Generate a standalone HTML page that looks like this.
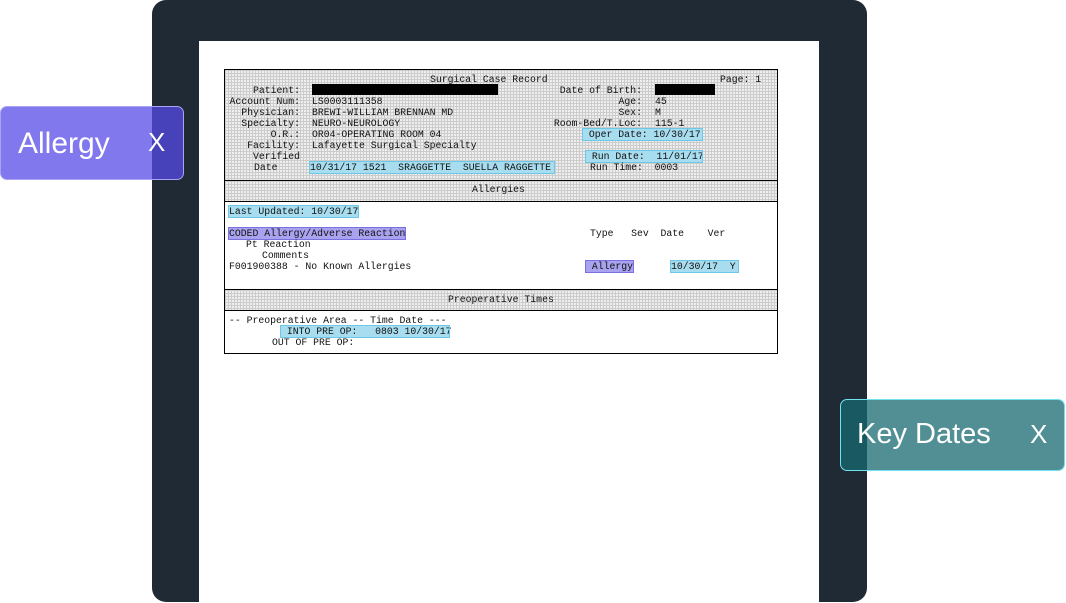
<!DOCTYPE html>
<html><head><meta charset="utf-8"><style>
body{margin:0;width:1066px;height:603px;background:#fff;position:relative;overflow:hidden;font-family:"Liberation Mono",monospace}
.frame{position:absolute;left:152px;top:0;width:715px;height:602px;background:#1f2a35;border-radius:14px}
.page{position:absolute;left:199px;top:41px;width:620px;height:562px;background:#fff}
.doc{position:absolute;left:224px;top:69px;width:552px;height:283px;border:1px solid #000}
.grid{position:absolute;left:0;width:552px;background-color:#eee;background-image:linear-gradient(#ccc 1px,transparent 1px),linear-gradient(90deg,#ccc 1px,transparent 1px);background-size:3px 3px}
.t{position:absolute;font-size:9.8px;line-height:11px;white-space:pre;color:#111}
.r{text-align:right}
.b{background:#a8ddef;outline:1px solid #6cc8e6}
.p{background:#a9a3ef;outline:1px solid #7a70e0}
.blk{position:absolute;background:#000;height:11px}
.tag{position:absolute;font-family:"Liberation Sans",sans-serif;color:#fff;border-radius:7px;box-sizing:border-box}
</style></head><body>
<div class="frame"></div>
<div class="page"></div>
<div class="doc">
 <div class="grid" style="top:0;height:110px;border-bottom:1px solid #000"></div>
 <div class="grid" style="top:111px;height:20px;border-bottom:1px solid #000"></div>
 <div class="grid" style="top:219px;height:20px;border-top:1px solid #000;border-bottom:1px solid #000"></div>
</div>
<div class="t" style="left:430px;top:74px">Surgical Case Record</div>
<div class="t" style="left:720px;top:74px">Page: 1</div>
<div class="t r" style="left:226px;width:74px;top:85px">Patient:
Account Num:
Physician:
Specialty:
O.R.:
Facility:
Verified
</div>
<div class="t" style="left:254px;top:162px">Date</div>
<div class="blk" style="left:312px;top:84px;width:186px"></div>
<div class="t" style="left:312px;top:96px">LS0003111358
BREWI-WILLIAM BRENNAN MD
NEURO-NEUROLOGY
OR04-OPERATING ROOM 04
Lafayette Surgical Specialty</div>
<div class="t b" style="left:310px;top:162px;width:244px">10/31/17 1521  SRAGGETTE  SUELLA RAGGETTE</div>
<div class="t r" style="left:540px;width:102px;top:85px">Date of Birth:
Age:
Sex:
Room-Bed/T.Loc:</div>
<div class="blk" style="left:655px;top:84px;width:60px"></div>
<div class="t" style="left:655px;top:96px">45
M
115-1</div>
<div class="t b" style="left:583px;top:129px;width:119px"> Oper Date: 10/30/17</div>
<div class="t b" style="left:586px;top:151px;width:116px"> Run Date:  11/01/17</div>
<div class="t" style="left:590px;top:162px">Run Time:  0003</div>
<div class="t" style="left:472px;top:184px">Allergies</div>
<div class="t b" style="left:229px;top:206px">Last Updated: 10/30/17</div>
<div class="t p" style="left:229px;top:228px">CODED Allergy/Adverse Reaction</div>
<div class="t" style="left:246px;top:239px">Pt Reaction</div>
<div class="t" style="left:262px;top:250px">Comments</div>
<div class="t" style="left:229px;top:261px">F001900388 - No Known Allergies</div>
<div class="t" style="left:590px;top:228px">Type   Sev  Date    Ver</div>
<div class="t p" style="left:586px;top:261px;width:47px"> Allergy</div>
<div class="t b" style="left:671px;top:261px;width:67px">10/30/17  Y</div>
<div class="t" style="left:448px;top:294px">Preoperative Times</div>
<div class="t" style="left:229px;top:315px">-- Preoperative Area -- Time Date ---</div>
<div class="t b" style="left:281px;top:326px;width:168px"> INTO PRE OP:   0803 10/30/17</div>
<div class="t" style="left:272px;top:337px">OUT OF PRE OP:</div>
<div class="tag" style="left:0;top:106px;width:184px;height:74px;background:rgba(85,75,229,0.75);border:1px solid #a9a2f5;font-size:30px;padding:20px 0 0 17px">Allergy<span style="position:absolute;left:147px;top:20px;font-size:26px">X</span></div>
<div class="tag" style="left:840px;top:399px;width:225px;height:72px;background:rgba(24,105,112,0.75);border:1px solid #6fe3ee;font-size:29px;padding:18px 0 0 16px">Key Dates<span style="position:absolute;left:189px;top:19px;font-size:26px">X</span></div>
</body></html>
